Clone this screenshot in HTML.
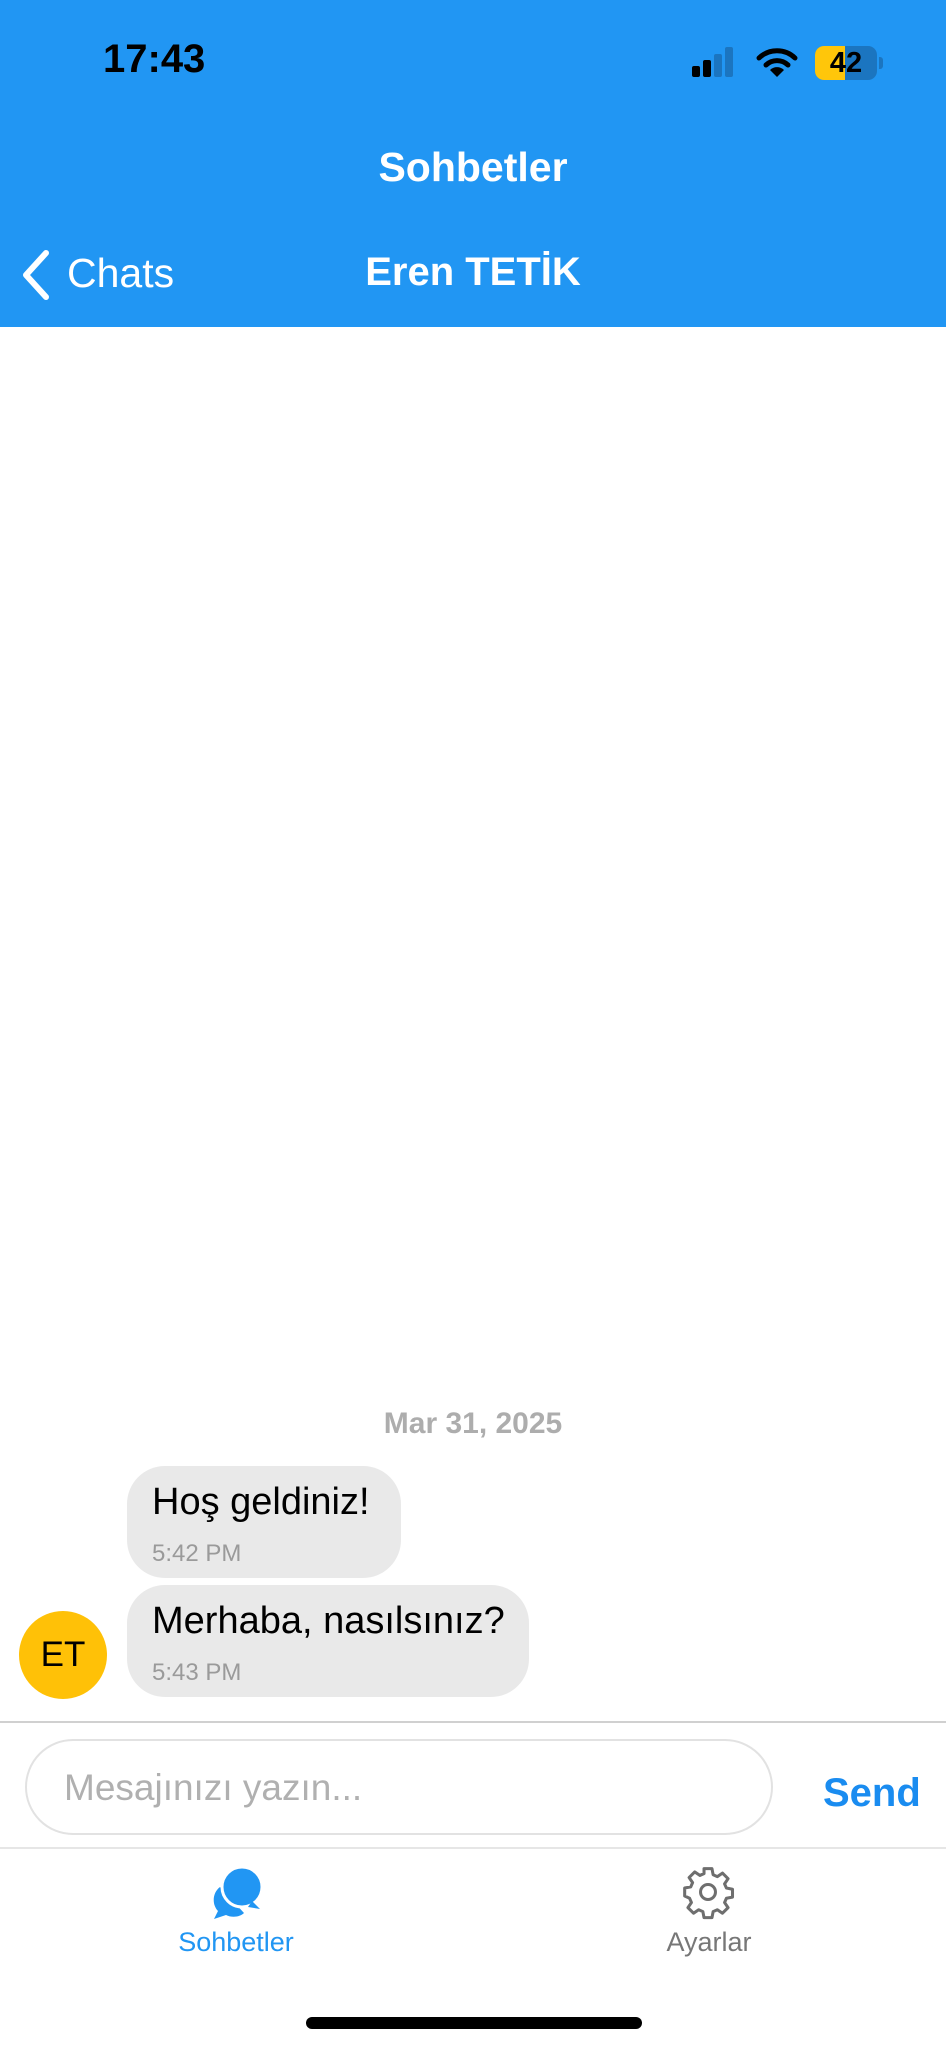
<!DOCTYPE html>
<html><head><meta charset="utf-8"><style>
*{margin:0;padding:0;box-sizing:border-box}
body{width:946px;height:2048px;background:#fff;font-family:"Liberation Sans",sans-serif;position:relative;overflow:hidden}
.a{position:absolute;white-space:nowrap}
.hdr{position:absolute;left:0;top:0;width:946px;height:327px;background:#2196F3}
.bub{position:absolute;background:#e9e9e9;border-radius:38px;left:127px}
.msg{position:absolute;left:25px;font-size:38px;color:#000}
.tm{position:absolute;left:25px;font-size:24px;color:#9a9a9a}
</style></head><body>
<div class="hdr"></div>
<div class="a" style="left:103px;top:37px;font-size:40px;font-weight:bold;color:#000">17:43</div>
<div class="a" style="left:692px;top:66px;width:8px;height:11px;background:#000;border-radius:2px"></div>
<div class="a" style="left:703px;top:60px;width:8px;height:17px;background:#000;border-radius:2px"></div>
<div class="a" style="left:714px;top:54px;width:8px;height:23px;background:#1b75c0;border-radius:2px"></div>
<div class="a" style="left:725px;top:47px;width:8px;height:30px;background:#1b75c0;border-radius:2px"></div>
<svg class="a" style="left:756px;top:46px" width="42" height="32" viewBox="0 0 42 32"><path d="M3 12 A26 26 0 0 1 39 12" stroke="#000" stroke-width="5" fill="none" stroke-linecap="round"/><path d="M10 19 A16 16 0 0 1 32 19" stroke="#000" stroke-width="5" fill="none" stroke-linecap="round"/><path d="M21 31 L14 24 A10 10 0 0 1 28 24 Z" fill="#000"/></svg>
<div class="a" style="left:815px;top:46px;width:62px;height:34px;border-radius:9px;background:#1b75c0;overflow:hidden"><div style="width:30px;height:34px;background:#FFC60A"></div></div>
<div class="a" style="left:879px;top:57px;width:4px;height:12px;background:#1b75c0;border-radius:0 3px 3px 0"></div>
<div class="a" style="left:815px;top:46px;width:62px;line-height:34px;text-align:center;font-size:29px;font-weight:bold;color:#000">42</div>
<div class="a" style="left:0;width:946px;text-align:center;top:144px;font-size:41px;font-weight:bold;color:#fff">Sohbetler</div>
<svg class="a" style="left:18px;top:249px" width="34" height="52" viewBox="0 0 34 52"><path d="M28 4 L8 26 L28 48" stroke="#fff" stroke-width="6" fill="none" stroke-linecap="round" stroke-linejoin="round"/></svg>
<div class="a" style="left:67px;top:250px;font-size:41px;color:#fff">Chats</div>
<div class="a" style="left:0;width:946px;text-align:center;top:250px;font-size:40px;font-weight:bold;color:#fff">Eren TETİK</div>

<div class="a" style="left:0;width:946px;text-align:center;top:1407px;font-size:30px;font-weight:bold;color:#adadad">Mar 31, 2025</div>
<div class="bub" style="top:1466px;width:274px;height:112px"><div class="msg" style="top:15px">Hoş geldiniz!</div><div class="tm" style="top:74px">5:42 PM</div></div>
<div class="bub" style="top:1585px;width:402px;height:112px"><div class="msg" style="top:15px">Merhaba, nasılsınız?</div><div class="tm" style="top:74px">5:43 PM</div></div>
<div class="a" style="left:19px;top:1611px;width:88px;height:88px;border-radius:50%;background:#FFC107;text-align:center;line-height:88px;font-size:35px;color:#000">ET</div>

<div class="a" style="left:0;top:1721px;width:946px;height:2px;background:#d0d0d0"></div>
<div class="a" style="left:25px;top:1739px;width:748px;height:96px;border:2px solid #e2e2e2;border-radius:48px"></div>
<div class="a" style="left:64px;top:1767px;font-size:37px;color:#b0b0b0">Mesajınızı yazın...</div>
<div class="a" style="left:823px;top:1771px;font-size:40px;font-weight:bold;color:#1a8cf0">Send</div>
<div class="a" style="left:0;top:1847px;width:946px;height:2px;background:#e6e6e6"></div>

<svg class="a" style="left:208px;top:1865px" width="56" height="56" viewBox="0 0 56 56"><path d="M12 22 C4 28 4 40 10 46 L6 54 L18 50 C24 53 32 52 36 48 Z" fill="#2196F3"/><circle cx="34" cy="22" r="20" fill="#2196F3" stroke="#fff" stroke-width="3"/><path d="M44 36 L52 44 L40 42 Z" fill="#2196F3"/></svg>
<div class="a" style="left:0;width:472px;text-align:center;top:1927px;font-size:27px;color:#2196F3">Sohbetler</div>
<svg class="a" style="left:680px;top:1864px" width="56" height="56" viewBox="0 0 24 24"><path d="M10.3 2h3.4l.5 2.6 1.8.8 2.2-1.5 2.4 2.4-1.5 2.2.8 1.8 2.6.5v3.4l-2.6.5-.8 1.8 1.5 2.2-2.4 2.4-2.2-1.5-1.8.8-.5 2.6h-3.4l-.5-2.6-1.8-.8-2.2 1.5-2.4-2.4 1.5-2.2-.8-1.8L2 13.7v-3.4l2.6-.5.8-1.8-1.5-2.2 2.4-2.4 2.2 1.5 1.8-.8z" fill="none" stroke="#6e6e6e" stroke-width="1.3" stroke-linejoin="round"/><circle cx="12" cy="12" r="3.2" fill="none" stroke="#6e6e6e" stroke-width="1.3"/></svg>
<div class="a" style="left:472px;width:474px;text-align:center;top:1927px;font-size:27px;color:#777">Ayarlar</div>
<div class="a" style="left:306px;top:2017px;width:336px;height:12px;border-radius:6px;background:#000"></div>
</body></html>
